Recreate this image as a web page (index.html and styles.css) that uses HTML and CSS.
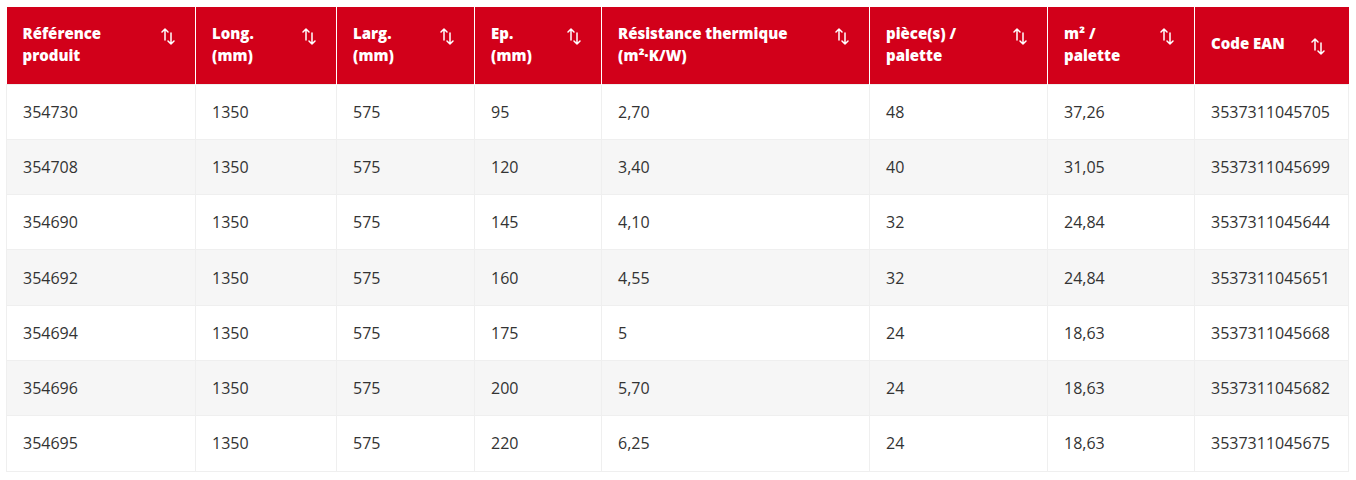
FILE: index.html
```html
<!DOCTYPE html>
<html lang="fr">
<head>
<meta charset="utf-8">
<title>Produits</title>
<link rel="stylesheet" href="styles.css">
</head>
<body>
<div class="wrap">
<table class="products">
  <colgroup>
    <col class="c1"><col class="c2"><col class="c3"><col class="c4"><col class="c5"><col class="c6"><col class="c7"><col class="c8">
  </colgroup>
  <thead>
    <tr>
      <th><div class="th"><span>Référence<br>produit</span><svg class="sort" viewBox="0 0 14 20"><path d="M4 3v11M1 6l3-3 3 3M10 7v11M7 15l3 3 3-3"/></svg></div></th>
      <th><div class="th"><span>Long.<br>(mm)</span><svg class="sort" viewBox="0 0 14 20"><path d="M4 3v11M1 6l3-3 3 3M10 7v11M7 15l3 3 3-3"/></svg></div></th>
      <th><div class="th"><span>Larg.<br>(mm)</span><svg class="sort" viewBox="0 0 14 20"><path d="M4 3v11M1 6l3-3 3 3M10 7v11M7 15l3 3 3-3"/></svg></div></th>
      <th><div class="th"><span>Ep.<br>(mm)</span><svg class="sort" viewBox="0 0 14 20"><path d="M4 3v11M1 6l3-3 3 3M10 7v11M7 15l3 3 3-3"/></svg></div></th>
      <th><div class="th"><span>Résistance thermique<br>(m²·K/W)</span><svg class="sort" viewBox="0 0 14 20"><path d="M4 3v11M1 6l3-3 3 3M10 7v11M7 15l3 3 3-3"/></svg></div></th>
      <th><div class="th"><span>pièce(s) /<br>palette</span><svg class="sort" viewBox="0 0 14 20"><path d="M4 3v11M1 6l3-3 3 3M10 7v11M7 15l3 3 3-3"/></svg></div></th>
      <th><div class="th"><span>m² /<br>palette</span><svg class="sort" viewBox="0 0 14 20"><path d="M4 3v11M1 6l3-3 3 3M10 7v11M7 15l3 3 3-3"/></svg></div></th>
      <th class="last"><div class="th th-inline"><span>Code EAN</span><svg class="sort" viewBox="0 0 14 20"><path d="M4 3v11M1 6l3-3 3 3M10 7v11M7 15l3 3 3-3"/></svg></div></th>
    </tr>
  </thead>
  <tbody>
    <tr><td>354730</td><td>1350</td><td>575</td><td>95</td><td>2,70</td><td>48</td><td>37,26</td><td>3537311045705</td></tr>
    <tr><td>354708</td><td>1350</td><td>575</td><td>120</td><td>3,40</td><td>40</td><td>31,05</td><td>3537311045699</td></tr>
    <tr><td>354690</td><td>1350</td><td>575</td><td>145</td><td>4,10</td><td>32</td><td>24,84</td><td>3537311045644</td></tr>
    <tr><td>354692</td><td>1350</td><td>575</td><td>160</td><td>4,55</td><td>32</td><td>24,84</td><td>3537311045651</td></tr>
    <tr><td>354694</td><td>1350</td><td>575</td><td>175</td><td>5</td><td>24</td><td>18,63</td><td>3537311045668</td></tr>
    <tr><td>354696</td><td>1350</td><td>575</td><td>200</td><td>5,70</td><td>24</td><td>18,63</td><td>3537311045682</td></tr>
    <tr><td>354695</td><td>1350</td><td>575</td><td>220</td><td>6,25</td><td>24</td><td>18,63</td><td>3537311045675</td></tr>
  </tbody>
</table>
</div>
</body>
</html>
```
FILE: styles.css
```css
html, body {
  margin: 0;
  padding: 0;
  background: #ffffff;
}
.wrap {
  padding: 7px 0 0 6px;
}
.products {
  border-collapse: collapse;
  table-layout: fixed;
  width: 1342px;
  font-family: "Open Sans", "Liberation Sans", sans-serif;
}
.c1 { width: 189px; }
.c2 { width: 141px; }
.c3 { width: 138px; }
.c4 { width: 127px; }
.c5 { width: 268px; }
.c6 { width: 178px; }
.c7 { width: 147px; }
.c8 { width: 154px; }
.products th {
  background: #d2001a;
  color: #ffffff;
  font-weight: 800;
  font-size: 15px;
  line-height: 22px;
  text-align: left;
  height: 77px;
  padding: 0 20px 2px 16px;
  border-left: 1px solid #ffffff;
  box-sizing: border-box;
  vertical-align: middle;
}
.products th:first-child {
  border-left: none;
}
.th {
  display: flex;
  justify-content: space-between;
  align-items: flex-start;
}
.th-inline {
  justify-content: flex-start;
  gap: 26px;
}
.sort {
  width: 14px;
  height: 20px;
  margin-top: 4px;
  flex: none;
  fill: none;
  stroke: #ffffff;
  stroke-width: 1.5;
  stroke-linecap: round;
  stroke-linejoin: round;
}
.products td {
  height: 55.3px;
  box-sizing: border-box;
  padding: 0 16px;
  font-size: 16px;
  color: #333333;
  border: 1px solid #efefef;
  vertical-align: middle;
}
.products tbody tr:nth-child(even) td {
  background: #f6f6f6;
}
```
